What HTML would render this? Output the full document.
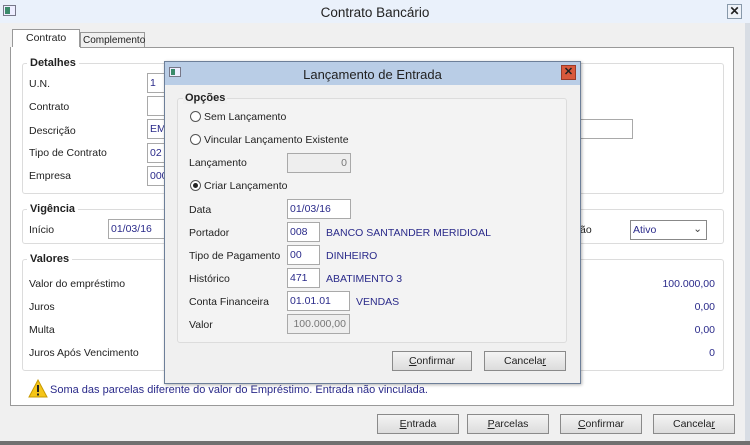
<!DOCTYPE html>
<html><head><meta charset="utf-8"><style>
*{box-sizing:border-box;margin:0;padding:0}
body{width:750px;height:445px;overflow:hidden;background:#f0f0f0;font-family:"Liberation Sans",sans-serif;font-size:10.5px;color:#222;position:relative}
.a{position:absolute}
.t{position:absolute;white-space:nowrap}
.inp{position:absolute;background:#fff;border:1px solid #a9a9a9;height:20px;color:#2a2a8a;padding:3px 2px;white-space:nowrap;overflow:hidden}
.dis{background:#eeeeee;color:#777;text-align:right;padding-right:3px}
.grp{position:absolute;border:1px solid #dcdcdc;border-radius:3px}
.gt{position:absolute;background:#fff;font-weight:bold;padding:0 3px;top:-7px;left:4px;font-size:11px}
.btn{position:absolute;height:20px;border:1px solid #8a8a8a;background:linear-gradient(#f4f4f4,#dcdcdc);text-align:center;line-height:18px;font-size:10.5px;color:#222}
.blue{color:#2a2a8a}
.rad{position:absolute;width:11px;height:11px;border:1px solid #555;border-radius:50%;background:#fff}
</style></head><body>
<div class="a" style="left:0;top:0;width:750px;height:23px;background:#eaf1fb"></div>
<div class="a" style="left:3px;top:5px;width:13px;height:11px;border:1px solid #778;background:#eef"><div class="a" style="left:1px;top:1px;width:5px;height:7px;background:#3a8a6a"></div></div>
<div class="t" style="left:0;width:750px;text-align:center;top:5px;font-size:13.5px;color:#222">Contrato Bancário</div>
<div class="a" style="left:727px;top:4px;width:15px;height:15px;border:1px solid #8899aa;background:#eef2f8;text-align:center;font-weight:bold;font-size:12px;line-height:13px">✕</div>
<div class="a" style="left:745px;top:23px;width:5px;height:422px;background:#d8dde4"></div>
<div class="a" style="left:0;top:441px;width:750px;height:4px;background:#707070"></div>
<div class="a" style="left:12px;top:29px;width:68px;height:19px;background:#fff;border:1px solid #999;border-bottom:none"></div>
<div class="t" style="left:26px;top:32px">Contrato</div>
<div class="a" style="left:80px;top:32px;width:65px;height:16px;background:#f0f0f0;border:1px solid #999;border-bottom:none"></div>
<div class="t" style="left:83px;top:35px;font-size:10px">Complemento</div>
<div class="a" style="left:10px;top:47px;width:724px;height:359px;background:#fff;border:1px solid #999;border-top:none"></div>
<div class="a" style="left:80px;top:47px;width:654px;height:1px;background:#999"></div>
<div class="grp" style="left:22px;top:63px;width:702px;height:131px"><div class="gt">Detalhes</div></div>
<div class="t" style="left:29px;top:78px">U.N.</div>
<div class="t" style="left:29px;top:101px">Contrato</div>
<div class="t" style="left:29px;top:125px">Descrição</div>
<div class="t" style="left:29px;top:147px">Tipo de Contrato</div>
<div class="t" style="left:29px;top:170px">Empresa</div>
<div class="inp" style="left:147px;top:73px;width:30px">1</div>
<div class="inp" style="left:147px;top:96px;width:30px"></div>
<div class="inp" style="left:147px;top:119px;width:486px">EMP</div>
<div class="inp" style="left:147px;top:143px;width:30px">02</div>
<div class="inp" style="left:147px;top:166px;width:30px">000</div>
<div class="grp" style="left:22px;top:209px;width:702px;height:35px"><div class="gt">Vigência</div></div>
<div class="t" style="left:29px;top:224px">Início</div>
<div class="inp" style="left:108px;top:219px;width:70px">01/03/16</div>
<div class="t" style="left:580px;top:224px">ão</div>
<div class="inp" style="left:630px;top:220px;width:77px;border-color:#888">Ativo<span style="position:absolute;right:4px;top:2px;color:#444">⌄</span></div>
<div class="grp" style="left:22px;top:259px;width:702px;height:112px"><div class="gt">Valores</div></div>
<div class="t" style="left:29px;top:278px">Valor do empréstimo</div>
<div class="t" style="left:29px;top:301px">Juros</div>
<div class="t" style="left:29px;top:324px">Multa</div>
<div class="t" style="left:29px;top:347px">Juros Após Vencimento</div>
<div class="t blue" style="right:35px;top:278px">100.000,00</div>
<div class="t blue" style="right:35px;top:301px">0,00</div>
<div class="t blue" style="right:35px;top:324px">0,00</div>
<div class="t blue" style="right:35px;top:347px">0</div>
<svg class="a" style="left:28px;top:379px" width="20" height="19"><path d="M10 1 L19 18 L1 18 Z" fill="#f5c518" stroke="#c89a00"/><rect x="9" y="6" width="2" height="7" fill="#222"/><rect x="9" y="14.5" width="2" height="2" fill="#222"/></svg>
<div class="t blue" style="left:50px;top:384px;font-size:11px">Soma das parcelas diferente do valor do Empréstimo. Entrada não vinculada.</div>
<div class="btn" style="left:377px;top:414px;width:82px"><u>E</u>ntrada</div>
<div class="btn" style="left:467px;top:414px;width:82px"><u>P</u>arcelas</div>
<div class="btn" style="left:560px;top:414px;width:82px"><u>C</u>onfirmar</div>
<div class="btn" style="left:653px;top:414px;width:82px">Cancela<u>r</u></div>
<div class="a" style="left:164px;top:61px;width:417px;height:323px;background:#f0f0f0;border:1px solid #6d7f99;box-shadow:1px 1px 3px rgba(0,0,0,.3)"></div>
<div class="a" style="left:165px;top:62px;width:415px;height:23px;background:#b9cde6"></div>
<div class="a" style="left:169px;top:67px;width:12px;height:10px;border:1px solid #778;background:#eef"><div class="a" style="left:1px;top:1px;width:4px;height:6px;background:#3a8a6a"></div></div>
<div class="t" style="left:165px;width:415px;text-align:center;top:67px;font-size:13px">Lançamento de Entrada</div>
<div class="a" style="left:561px;top:65px;width:15px;height:15px;background:#d9593c;border:1px solid #9b3a28;text-align:center;font-weight:bold;font-size:11px;line-height:13px;color:#222">✕</div>
<div class="a" style="left:177px;top:98px;width:390px;height:245px;border:1px solid #dcdcdc;border-radius:3px;background:#f3f3f3"></div>
<div class="t" style="left:183px;top:92px;font-weight:bold;background:#f0f0f0;padding:0 2px;font-size:11px">Opções</div>
<div class="rad" style="left:190px;top:111px"></div>
<div class="t" style="left:204px;top:111px">Sem Lançamento</div>
<div class="rad" style="left:190px;top:134px"></div>
<div class="t" style="left:204px;top:134px">Vincular Lançamento Existente</div>
<div class="t" style="left:189px;top:157px">Lançamento</div>
<div class="inp dis" style="left:287px;top:153px;width:64px">0</div>
<div class="rad" style="left:190px;top:180px"><div class="a" style="left:2px;top:2px;width:5px;height:5px;border-radius:50%;background:#222"></div></div>
<div class="t" style="left:204px;top:180px">Criar Lançamento</div>
<div class="t" style="left:189px;top:204px">Data</div>
<div class="inp" style="left:287px;top:199px;width:64px">01/03/16</div>
<div class="t" style="left:189px;top:227px">Portador</div>
<div class="inp" style="left:287px;top:222px;width:33px">008</div>
<div class="t blue" style="left:326px;top:227px">BANCO SANTANDER MERIDIOAL</div>
<div class="t" style="left:189px;top:250px">Tipo de Pagamento</div>
<div class="inp" style="left:287px;top:245px;width:33px">00</div>
<div class="t blue" style="left:326px;top:250px">DINHEIRO</div>
<div class="t" style="left:189px;top:273px">Histórico</div>
<div class="inp" style="left:287px;top:268px;width:33px">471</div>
<div class="t blue" style="left:326px;top:273px">ABATIMENTO 3</div>
<div class="t" style="left:189px;top:296px">Conta Financeira</div>
<div class="inp" style="left:287px;top:291px;width:63px">01.01.01</div>
<div class="t blue" style="left:356px;top:296px">VENDAS</div>
<div class="t" style="left:189px;top:319px">Valor</div>
<div class="inp dis" style="left:287px;top:314px;width:63px">100.000,00</div>
<div class="btn" style="left:392px;top:351px;width:80px"><u>C</u>onfirmar</div>
<div class="btn" style="left:484px;top:351px;width:82px">Cancela<u>r</u></div>
</body></html>
